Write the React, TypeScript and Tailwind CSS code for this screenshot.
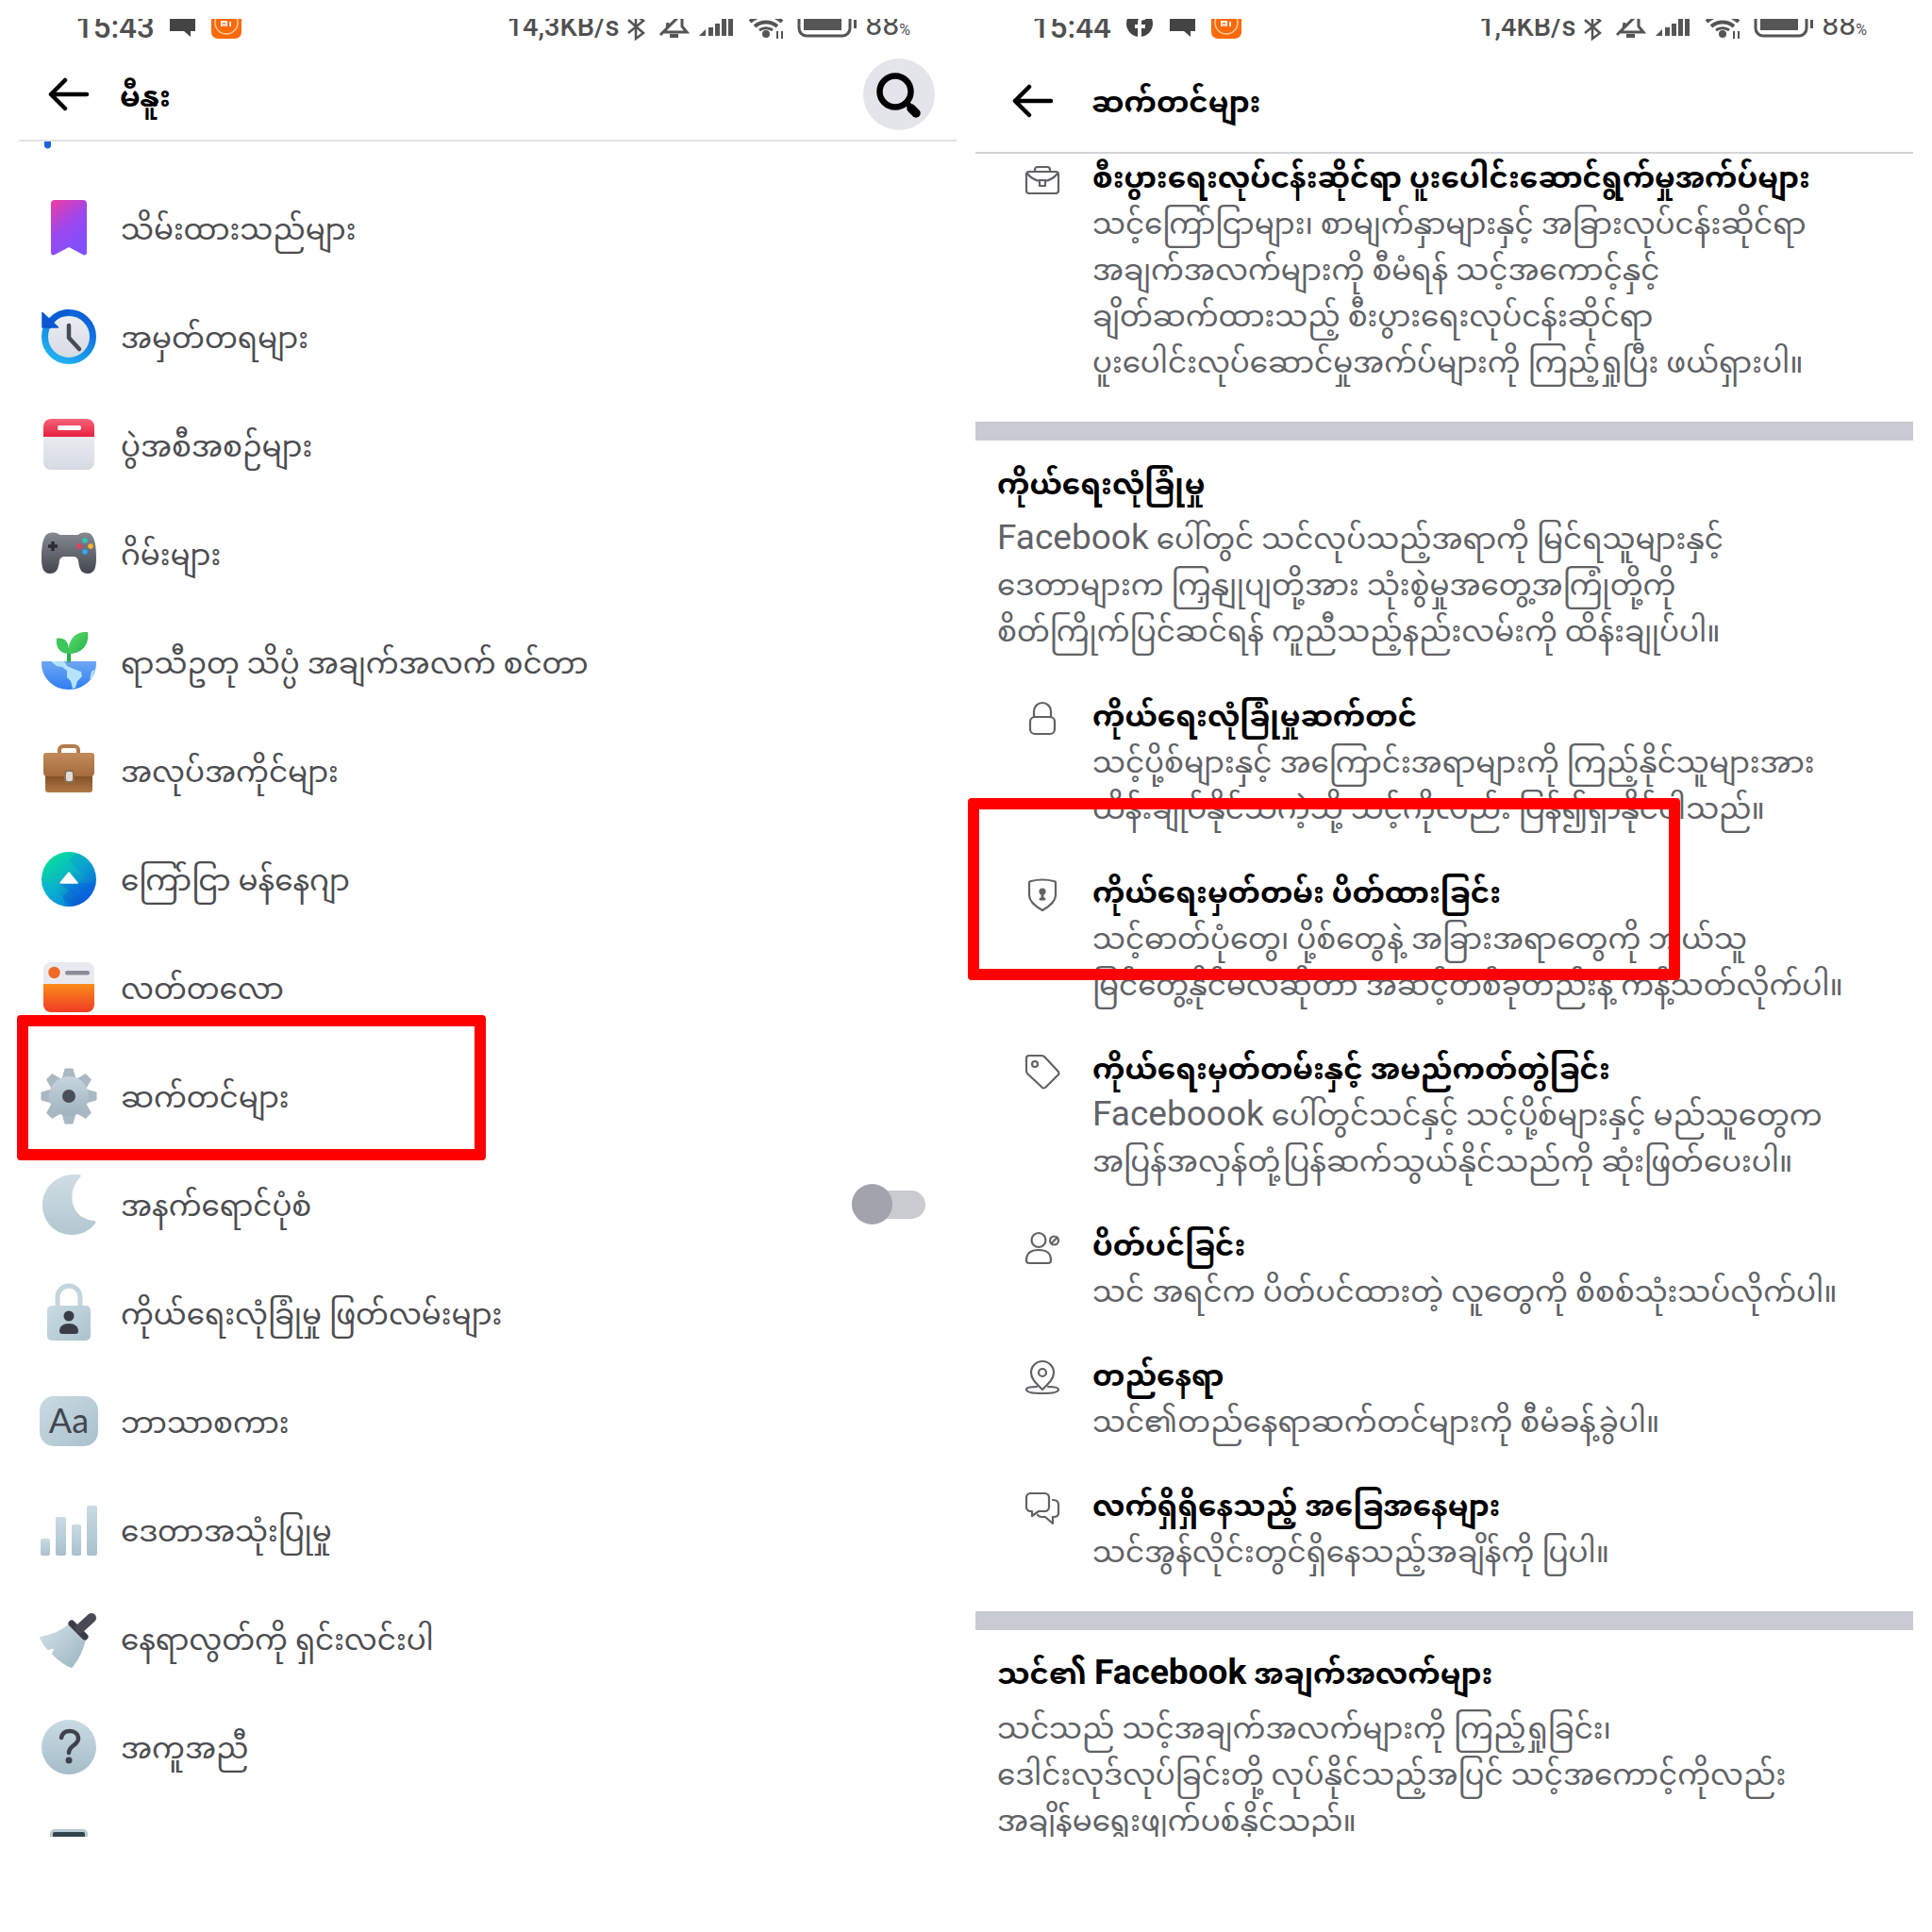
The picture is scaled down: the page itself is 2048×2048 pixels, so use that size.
import React from 'react';

type IconProps = { children: React.ReactNode };

function TileIcon({ children }: IconProps) {
  return (
    <svg className="size-[60px] shrink-0 overflow-visible" viewBox="0 0 60 60" fill="none" aria-hidden="true">
      {children}
    </svg>
  );
}

function LineIcon({ children }: IconProps) {
  return (
    <svg
      className="mt-[5px] size-9 shrink-0 overflow-visible"
      viewBox="0 0 36 36"
      fill="none"
      stroke="#606266"
      strokeWidth="2.2"
      strokeLinecap="round"
      strokeLinejoin="round"
      aria-hidden="true"
    >
      {children}
    </svg>
  );
}

function Fade({ id, from, to, slant = false }: { id: string; from: string; to: string; slant?: boolean }) {
  return (
    <linearGradient id={id} x1="0" y1="0" x2={slant ? '1' : '0'} y2="1">
      <stop stopColor={from} />
      <stop offset="1" stopColor={to} />
    </linearGradient>
  );
}

const gearTeeth = [0, 45, 90, 135, 180, 225, 270, 315];

const menuItems = [
  {
    label: 'သိမ်းထားသည်များ',
    icon: (
      <TileIcon>
        <defs>
          <linearGradient id="saved" x1="0" y1="0" x2="0.5" y2="1">
            <stop stopColor="#f03ba0" />
            <stop offset="0.55" stopColor="#9c48ee" />
            <stop offset="1" stopColor="#8150fa" />
          </linearGradient>
        </defs>
        <path d="M11 4a4 4 0 0 1 4-4h30a4 4 0 0 1 4 4v52c0 2-2 3-4 2L30 50 15 58c-2 1-4 0-4-2z" fill="url(#saved)" />
      </TileIcon>
    ),
  },
  {
    label: 'အမှတ်တရများ',
    icon: (
      <TileIcon>
        <defs>
          <linearGradient id="memory" x1="0.8" y1="0" x2="0.2" y2="1">
            <stop stopColor="#0a5cd8" />
            <stop offset="1" stopColor="#22b4f2" />
          </linearGradient>
          <Fade id="memoryFace" from="#eceef2" to="#d5d9e2" />
        </defs>
        <circle cx="30" cy="30" r="25.5" fill="url(#memoryFace)" stroke="url(#memory)" strokeWidth="7" />
        <path d="M8 20C12 11 20 4 31 4" stroke="#0b5ad3" strokeWidth="6" />
        <path d="M2 4.500L18.500 20H2z" fill="#0b57cf" stroke="#0b57cf" strokeWidth="1.500" strokeLinejoin="round" />
        <path d="M30 18v13l11 12" stroke="#474b55" strokeWidth="4.500" strokeLinecap="round" strokeLinejoin="round" />
      </TileIcon>
    ),
  },
  {
    label: 'ပွဲအစီအစဉ်များ',
    icon: (
      <TileIcon>
        <defs>
          <Fade id="eventTop" from="#f7647b" to="#e5203f" />
          <Fade id="eventBody" from="#e9ebf0" to="#d6dae3" />
        </defs>
        <path d="M3 20h54v28a8 8 0 0 1-8 8H11a8 8 0 0 1-8-8z" fill="url(#eventBody)" />
        <path d="M3 21v-11a8 8 0 0 1 8-8h38a8 8 0 0 1 8 8v11z" fill="url(#eventTop)" />
        <rect x="18" y="9" width="25" height="5" rx="2" fill="#fff" />
      </TileIcon>
    ),
  },
  {
    label: 'ဂိမ်းများ',
    icon: (
      <TileIcon>
        <defs>
          <Fade id="pad" from="#868a92" to="#43464f" />
        </defs>
        <path
          d="M7 9c3-2 9-2 12 0 1 1 2 1 3 1h16c1 0 2 0 3-1 3-2 9-2 12 0 5 4 6 15 6 25 0 9-1 17-9 17-7 0-9-5-10-14-1-3-3-4-5-4H25c-2 0-4 1-5 4-1 9-3 14-10 14-8 0-9-8-9-17C1 24 2 13 7 9z"
          fill="url(#pad)"
        />
        <path d="M13 17v10M8 22h10" stroke="#2b2d33" strokeWidth="3.500" />
        <circle cx="47" cy="16" r="2.800" fill="#30c9b4" />
        <circle cx="53" cy="22" r="2.800" fill="#f5b82e" />
        <circle cx="47" cy="28" r="2.800" fill="#32a9f2" />
        <circle cx="41" cy="22" r="2.800" fill="#ea3c60" />
      </TileIcon>
    ),
  },
  {
    label: 'ရာသီဥတု သိပ္ပံ အချက်အလက် စင်တာ',
    icon: (
      <TileIcon>
        <defs>
          <Fade id="earth" from="#6ea7f2" to="#2f7df2" />
          <Fade id="leaf" from="#5ddd6a" to="#24b04c" slant />
        </defs>
        <path d="M2 29h56c1 0 1 1 1 2 0 16-13 28-29 28S1 47 1 31c0-1 0-2 1-2z" fill="url(#earth)" />
        <path d="M11 29h14l3 5 7 3 8 3 1 5-5 5-2 7-3 1-2-8-4-4v-7l-5-4-6-1z" fill="#b4e3fb" />
        <path d="M54 40l4-3-3 9-3 2z" fill="#b4e3fb" />
        <path d="M30 30V15" stroke="#27b04d" strokeWidth="4" />
        <path d="M30 21C19 21 16 12 17 5c7-2 14 2 13 16z" fill="#3cc65c" />
        <path d="M30 21C28 5 38-3 50-2c2 13-6 23-20 23z" fill="url(#leaf)" />
      </TileIcon>
    ),
  },
  {
    label: 'အလုပ်အကိုင်များ',
    icon: (
      <TileIcon>
        <defs>
          <Fade id="caseTop" from="#c18a59" to="#a66c3d" />
          <Fade id="caseBase" from="#7d4a22" to="#b07946" />
        </defs>
        <path d="M20 13V8a4 4 0 0 1 4-4h12a4 4 0 0 1 4 4v5" stroke="#b27c4b" strokeWidth="4" />
        <path d="M5 33h50v17a3 3 0 0 1-3 3H8a3 3 0 0 1-3-3z" fill="url(#caseBase)" />
        <path d="M3 14a3 3 0 0 1 3-3h48a3 3 0 0 1 3 3v17c0 3-1 5-4 5H7c-3 0-4-2-4-5z" fill="url(#caseTop)" />
        <rect x="26" y="30" width="9" height="12" rx="3" fill="#e3dcd4" stroke="#8a7058" strokeWidth="2" />
      </TileIcon>
    ),
  },
  {
    label: 'ကြော်ငြာ မန်နေဂျာ',
    icon: (
      <TileIcon>
        <defs>
          <linearGradient id="ads" x1="0.2" y1="0.1" x2="0.85" y2="0.9">
            <stop stopColor="#06dba0" />
            <stop offset="0.45" stopColor="#0bb2c8" />
            <stop offset="1" stopColor="#0753dd" />
          </linearGradient>
          <clipPath id="adsClip">
            <circle cx="30" cy="30" r="29" />
          </clipPath>
        </defs>
        <g clipPath="url(#adsClip)">
          <rect width="60" height="60" fill="url(#ads)" />
          <path d="M30 10L42 0h18v40z" fill="#0a7fe0" fillOpacity="0.250" />
          <path d="M0 26L34 60H0z" fill="#08b0e0" fillOpacity="0.450" />
          <path d="M18 34h42L44 50z" fill="#0a55e4" fillOpacity="0.350" />
          <path d="M24 48l8-8 20 20H26z" fill="#0a48c8" fillOpacity="0.250" />
        </g>
        <path d="M30 23l9 11H21z" fill="#fff" stroke="#fff" strokeWidth="1.500" strokeLinejoin="round" />
      </TileIcon>
    ),
  },
  {
    label: 'လတ်တလော',
    icon: (
      <TileIcon>
        <defs>
          <Fade id="feed" from="#fa8c1b" to="#f03b25" />
        </defs>
        <path d="M3 26V11a8 8 0 0 1 8-8h38a8 8 0 0 1 8 8v15z" fill="#e9eaf0" />
        <path d="M3 26h54v22a8 8 0 0 1-8 8H11a8 8 0 0 1-8-8z" fill="url(#feed)" />
        <circle cx="14.500" cy="14" r="6.200" fill="#f06a22" />
        <rect x="26" y="12" width="26" height="4.500" rx="2.200" fill="#8a8d97" />
      </TileIcon>
    ),
  },
  {
    label: 'ဆက်တင်များ',
    icon: (
      <TileIcon>
        <defs>
          <Fade id="gear" from="#c6d5dd" to="#9fb2be" />
        </defs>
        {gearTeeth.map(angle => (
          <path key={angle} d="M26 1h8l3 11H23z" fill="#a9b8c3" stroke="#a9b8c3" strokeWidth="1" strokeLinejoin="round" transform={`rotate(${angle} 30 30)`} />
        ))}
        <circle cx="30" cy="30" r="21" fill="url(#gear)" />
        <circle cx="30" cy="30" r="7" fill="#4a4e58" />
      </TileIcon>
    ),
  },
  {
    label: 'အနက်ရောင်ပုံစံ',
    toggle: true,
    icon: (
      <TileIcon>
        <defs>
          <Fade id="moon" from="#cfdde3" to="#b2c7d1" />
        </defs>
        <path d="M41-2c2 0 2 2 1 3-14 14-12 43 14 46 3 0 3 2 1 4C51 58 43 62 33 62 15 62 2 48 2 30S17-2 36-2z" fill="url(#moon)" />
      </TileIcon>
    ),
  },
  {
    label: 'ကိုယ်ရေးလုံခြုံမှု ဖြတ်လမ်းများ',
    icon: (
      <TileIcon>
        <defs>
          <Fade id="lock" from="#c9dbe2" to="#abc3ce" slant />
        </defs>
        <path d="M18 25V13a12 12 0 0 1 24 0v12" stroke="#c3d5dd" strokeWidth="5" />
        <rect x="7" y="22" width="46" height="37" rx="5" fill="url(#lock)" />
        <circle cx="30" cy="33" r="5.500" fill="#3a3d47" />
        <path d="M20 49c0-5 4-8 10-8s10 3 10 8c0 2-1 3-3 3H23c-2 0-3-1-3-3z" fill="#3a3d47" />
      </TileIcon>
    ),
  },
  {
    label: 'ဘာသာစကား',
    icon: (
      <TileIcon>
        <defs>
          <Fade id="language" from="#c9dbe2" to="#a9c1cd" slant />
        </defs>
        <rect x="-1" y="3" width="62" height="53" rx="15" fill="url(#language)" />
        <text x="30" y="42" textAnchor="middle" fontSize="36" fill="#43464f" className="font-['Lato',sans-serif]">
          Aa
        </text>
      </TileIcon>
    ),
  },
  {
    label: 'ဒေတာအသုံးပြုမှု',
    icon: (
      <TileIcon>
        <defs>
          <Fade id="bars" from="#c9dbe2" to="#a9c1cd" />
        </defs>
        <rect x="0" y="39" width="10" height="18" rx="2" fill="url(#bars)" />
        <rect x="16" y="16" width="11" height="41" rx="2" fill="url(#bars)" />
        <rect x="33" y="24" width="10" height="33" rx="2" fill="url(#bars)" />
        <rect x="49" y="4" width="11" height="53" rx="2" fill="url(#bars)" />
      </TileIcon>
    ),
  },
  {
    label: 'နေရာလွတ်ကို ရှင်းလင်းပါ',
    icon: (
      <TileIcon>
        <defs>
          <Fade id="brush" from="#d3e1e7" to="#9bb5c2" slant />
        </defs>
        <path d="M31 15l16 15c-2 11-7 21-14 30-8-3-14-8-20-14l3-7-8 2c-3-3-6-7-8-12 11-2 22-6 31-14z" fill="url(#brush)" stroke="url(#brush)" strokeWidth="2" strokeLinejoin="round" />
        <path d="M33 14l14 14" stroke="#3a3d47" strokeWidth="7" strokeLinecap="round" />
        <path d="M42 19L54 8" stroke="#474a54" strokeWidth="10" strokeLinecap="round" />
      </TileIcon>
    ),
  },
  {
    label: 'အကူအညီ',
    icon: (
      <TileIcon>
        <defs>
          <Fade id="help" from="#c9dbe2" to="#a5bdc9" />
        </defs>
        <circle cx="30" cy="30" r="29" fill="url(#help)" />
        <path d="M22 20c1-5 4-7 9-7 5 0 9 3 9 8 0 7-10 7-10 15" stroke="#3f424c" strokeWidth="4.500" strokeLinecap="round" />
        <circle cx="30" cy="44" r="3.500" fill="#3f424c" />
      </TileIcon>
    ),
  },
];

const businessItems = [
  {
    title: 'စီးပွားရေးလုပ်ငန်းဆိုင်ရာ ပူးပေါင်းဆောင်ရွက်မှုအက်ပ်များ',
    lines: [
      'သင့်ကြော်ငြာများ၊ စာမျက်နှာများနှင့် အခြားလုပ်ငန်းဆိုင်ရာ',
      'အချက်အလက်များကို စီမံရန် သင့်အကောင့်နှင့်',
      'ချိတ်ဆက်ထားသည့် စီးပွားရေးလုပ်ငန်းဆိုင်ရာ',
      'ပူးပေါင်းလုပ်ဆောင်မှုအက်ပ်များကို ကြည့်ရှုပြီး ဖယ်ရှားပါ။',
    ],
    icon: (
      <LineIcon>
        <rect x="1" y="9" width="34" height="23" rx="3" />
        <path d="M10 9V7a3 3 0 0 1 3-3h10a3 3 0 0 1 3 3v2M2 11c4 5 8 7 13 8M34 11c-4 5-8 7-13 8M15 18h6v6h-6z" />
      </LineIcon>
    ),
  },
];

const privacyItems = [
  {
    title: 'ကိုယ်ရေးလုံခြုံမှုဆက်တင်',
    lines: [
      'သင့်ပို့စ်များနှင့် အကြောင်းအရာများကို ကြည့်နိုင်သူများအား',
      'ထိန်းချုပ်နိုင်သကဲ့သို့ သင့်ကိုလည်း ပြန်၍ရှာနိုင်ပါသည်။',
    ],
    icon: (
      <LineIcon>
        <rect x="5" y="16" width="26" height="18" rx="5" />
        <path d="M9 16v-6a9 9 0 0 1 18 0v6" />
      </LineIcon>
    ),
  },
  {
    title: 'ကိုယ်ရေးမှတ်တမ်း ပိတ်ထားခြင်း',
    lines: [
      'သင့်ဓာတ်ပုံတွေ၊ ပို့စ်တွေနဲ့ အခြားအရာတွေကို ဘယ်သူ',
      'မြင်တွေ့နိုင်မလဲဆိုတာ အဆင့်တစ်ခုတည်းနဲ့ ကန့်သတ်လိုက်ပါ။',
    ],
    icon: (
      <LineIcon>
        <path d="M4 5c0-1 1-2 2-2 8-2 16-2 24 0 1 0 2 1 2 2v13c0 7-7 12-14 16C11 30 4 25 4 18z" />
        <circle cx="18" cy="14" r="2.500" fill="#606266" />
        <path d="M18 15v7M16 22h4" strokeWidth="3" />
      </LineIcon>
    ),
  },
  {
    title: 'ကိုယ်ရေးမှတ်တမ်းနှင့် အမည်ကတ်တွဲခြင်း',
    lines: [
      'Faceboook ပေါ်တွင်သင်နှင့် သင့်ပို့စ်များနှင့် မည်သူတွေက',
      'အပြန်အလှန်တုံ့ပြန်ဆက်သွယ်နိုင်သည်ကို ဆုံးဖြတ်ပေးပါ။',
    ],
    icon: (
      <LineIcon>
        <path d="M1 4c0-2 1-3 3-3h12c2 0 3 0 4 1l14 15c2 2 2 4 0 5L22 34c-2 2-4 2-5 0L2 20c-1-1-1-2-1-4z" />
        <circle cx="10" cy="10" r="3" />
      </LineIcon>
    ),
  },
  {
    title: 'ပိတ်ပင်ခြင်း',
    lines: ['သင် အရင်က ပိတ်ပင်ထားတဲ့ လူတွေကို စိစစ်သုံးသပ်လိုက်ပါ။'],
    icon: (
      <LineIcon>
        <circle cx="14" cy="9.500" r="7.500" />
        <path d="M1 31c0-8 5-11 13-11s13 3 13 11c0 2-1 3-3 3H4c-2 0-3-1-3-3z" />
        <circle cx="30.500" cy="10" r="4.500" />
        <path d="M27.500 13l6-6" />
      </LineIcon>
    ),
  },
  {
    title: 'တည်နေရာ',
    lines: ['သင်၏တည်နေရာဆက်တင်များကို စီမံခန့်ခွဲပါ။'],
    icon: (
      <LineIcon>
        <path d="M18 30C12 24 6 19 6 12a12 12 0 0 1 24 0c0 7-6 12-12 18z" />
        <circle cx="18" cy="12" r="4" />
        <path d="M12 27c-7 0-11 1-11 3 0 3 8 4 17 4s17-1 17-4c0-2-4-3-11-3" />
      </LineIcon>
    ),
  },
  {
    title: 'လက်ရှိရှိနေသည့် အခြေအနေများ',
    lines: ['သင်အွန်လိုင်းတွင်ရှိနေသည့်အချိန်ကို ပြပါ။'],
    icon: (
      <LineIcon>
        <path d="M5 2h16c2 0 4 2 4 4v11c0 2-2 4-4 4h-7l-7 5v-5H5c-2 0-4-2-4-4V6c0-2 2-4 4-4z" />
        <path d="M29 9c4 0 6 2 6 5v9c0 3-2 4-5 4h-1v7l-8-7h-4c-2 0-3-1-4-2" />
      </LineIcon>
    ),
  },
];

const privacyIntro = [
  'Facebook ပေါ်တွင် သင်လုပ်သည့်အရာကို မြင်ရသူများနှင့်',
  'ဒေတာများက ကြှနျုပျတို့အား သုံးစွဲမှုအတွေ့အကြုံတို့ကို',
  'စိတ်ကြိုက်ပြင်ဆင်ရန် ကူညီသည့်နည်းလမ်းကို ထိန်းချုပ်ပါ။',
];

const informationIntro = [
  'သင်သည် သင့်အချက်အလက်များကို ကြည့်ရှုခြင်း၊',
  'ဒေါင်းလုဒ်လုပ်ခြင်းတို့ လုပ်နိုင်သည့်အပြင် သင့်အကောင့်ကိုလည်း',
  'အချိန်မရွေးဖျက်ပစ်နိုင်သည်။',
];

// Latin words run in Roboto and a step larger than the Myanmar text around them
function MixedText({ text }: { text: string }) {
  return (
    <>
      {text.split(/([A-Za-z]+)/).map((part, index) =>
        /[A-Za-z]/.test(part) ? (
          <span key={index} className="font-['Roboto',sans-serif] text-[37px] leading-none">{part}</span>
        ) : (
          part
        ),
      )}
    </>
  );
}

function TextLines({ lines }: { lines: string[] }) {
  return (
    <p className="whitespace-nowrap text-[#606266]">
      {lines.map(line => (
        <span className="block h-[49px]" key={line}><MixedText text={line} /></span>
      ))}
    </p>
  );
}

function StatusBar({ time, speed, facebook = false }: { time: string; speed: string; facebook?: boolean }) {
  return (
    <div className="h-6 overflow-hidden font-['Roboto',sans-serif] font-medium text-[#505050]">
      <div className="-mt-3 flex h-9 items-center justify-between pr-[49px] pl-[60px]">
        <div className="flex items-center">
          <span className="w-[100px] pt-1 text-[33px]">{time}</span>
          {facebook ? (
            <svg className="mr-[18px] h-9 w-7" viewBox="0 0 28 36" fill="none" aria-hidden="true">
              <circle cx="14" cy="17" r="14" fill="#444" />
              <path d="M14 32V16c0-4 2-5 6-5M9 20h11" stroke="#fff" strokeWidth="4" />
            </svg>
          ) : null}
          <svg className="mr-4 h-9 w-7" viewBox="0 0 28 36" fill="#444" aria-hidden="true">
            <path d="M0 6h27v19h-5v6l-7-6H0z" />
          </svg>
          <svg className="h-9 w-8" viewBox="0 0 32 36" fill="none" aria-hidden="true">
            <rect y="1" width="32" height="32" rx="7" fill="#fb6a0a" />
            <circle cx="16" cy="16" r="12" stroke="#ffc9a0" strokeWidth="1.500" />
            <path d="M11 20v-5h5v5M13.500 17v3M20 15v5" stroke="#fff" strokeWidth="1.800" />
          </svg>
        </div>
        <div className="flex items-center">
          <span className="mr-2 pt-1 text-[29px]">{speed}</span>
          <svg className="mr-[3px] h-9 w-[250px]" viewBox="665 9 250 36" fill="none" stroke="#555" strokeWidth="2.500" aria-hidden="true">
            <path d="M667 22l16 14-8 6V17l8 6-16 13" />
            <path d="M705 35h24l-5-6v-10c0-4-3-6-7-6M701 38l25-25M708 31l1-6" strokeWidth="3" />
            <path d="M711 39h9" strokeWidth="4" />
            <g fill="#555" stroke="none">
              <path d="M742 39l7-7v7z" />
              <path d="M752 30h5v9h-5zM759 26h5v13h-5zM766 21h5v18h-5zM773 16h5v23h-5z" />
              <circle cx="813" cy="37" r="4" />
              <path d="M853 18h40v15h-40z" />
              <path d="M906 22h3v9h-3z" />
            </g>
            <path d="M796 24c10-9 24-9 34 0M801 29c7-6 17-6 24 0" strokeWidth="4" />
            <path d="M806 33c4-3 10-3 14 0" strokeWidth="3" />
            <path d="M825 34v8M830 34v8" strokeWidth="2" />
            <rect x="848" y="9" width="54" height="30" rx="8" strokeWidth="3" />
          </svg>
          <span className="text-[32px] font-normal">
            88<span className="text-base">%</span>
          </span>
        </div>
      </div>
    </div>
  );
}

function BackButton() {
  return (
    <button type="button" aria-label="နောက်သို့" className="shrink-0">
      <svg className="h-9 w-11" viewBox="0 0 44 36" fill="none" stroke="#000" strokeWidth="4.500" strokeLinecap="round" strokeLinejoin="round" aria-hidden="true">
        <path d="M18 3L3 18l15 15M3 18h38" />
      </svg>
    </button>
  );
}

function SettingRows({ items }: { items: typeof privacyItems }) {
  return (
    <ul className="grid gap-10 pt-[5px] pl-[53px]">
      {items.map(item => (
        <li key={item.title}>
          <a href="#" className="flex gap-[35px]">
            {item.icon}
            <div>
              <h3 className="whitespace-nowrap font-bold text-black">{item.title}</h3>
              <TextLines lines={item.lines} />
            </div>
          </a>
        </li>
      ))}
    </ul>
  );
}

function MenuPanel() {
  return (
    <section className="overflow-hidden">
      <StatusBar time="15:43" speed="14,3KB/s" />
      <header className="flex h-[106px] items-center border-b-2 border-[#e1e2e4] pt-2 pr-[23px] pl-[31px]">
        <BackButton />
        <h1 className="ml-8 flex-1 pt-3 font-bold text-black">မီနူး</h1>
        <button type="button" aria-label="ရှာရန်" className="size-[76px] rounded-full bg-[#e4e5ea]">
          <svg viewBox="0 0 76 76" fill="none" stroke="#000" strokeLinecap="round" aria-hidden="true">
            <circle cx="34" cy="35" r="16.500" strokeWidth="6.500" />
            <path d="M47 48l2 2" strokeWidth="6" />
            <path d="M51 53l5 5" strokeWidth="9.500" />
          </svg>
        </button>
      </header>
      <svg className="h-[34px] w-[300px]" viewBox="0 0 300 34" aria-hidden="true">
        <path d="M27 0h7v4a3 3 0 0 1-7 0z" fill="#1b66d8" />
      </svg>
      <ul>
        {menuItems.map(item => (
          <li className="flex h-[115px] items-center pr-[33px] pl-[23px]" key={item.label}>
            {item.toggle ? (
              <label className="flex flex-1 items-center gap-[25px]">
                {item.icon}
                <span className="flex-1 pt-3">{item.label}</span>
                <input
                  type="checkbox"
                  className="relative h-[30px] w-[78px] appearance-none rounded-full bg-[#c9cbd0] before:absolute before:-top-[7px] before:left-0 before:size-[43px] before:rounded-full before:bg-[#a1a4ac]"
                />
              </label>
            ) : (
              <a href="#" className="flex flex-1 items-center gap-[25px]">
                {item.icon}
                <span className="pt-3">{item.label}</span>
              </a>
            )}
          </li>
        ))}
      </ul>
      <div className="h-[38px] overflow-hidden pt-[30px] pl-[31px]">
        <svg className="size-11" viewBox="0 0 44 44" aria-hidden="true">
          <rect x="2" width="40" height="44" rx="5" fill="#b9cbd3" />
          <rect x="5" y="3" width="34" height="40" rx="2" fill="#33444d" />
        </svg>
      </div>
    </section>
  );
}

function SettingsPanel() {
  return (
    <section className="overflow-hidden">
      <StatusBar time="15:44" speed="1,4KB/s" facebook />
      <header className="flex h-[119px] items-center border-b-2 border-[#d2d5d7] pt-2 pl-[39px]">
        <BackButton />
        <h1 className="ml-10 pt-3 font-bold text-black">ဆက်တင်များ</h1>
      </header>
      <SettingRows items={businessItems} />
      <hr className="mt-[34px] h-5 border-0 bg-[#c8cbd1]" />
      <div className="pt-[26px] pb-9 pl-[23px]">
        <h2 className="mb-[9px] font-bold text-black">ကိုယ်ရေးလုံခြုံမှု</h2>
        <TextLines lines={privacyIntro} />
      </div>
      <SettingRows items={privacyItems} />
      <hr className="mt-[34px] h-5 border-0 bg-[#c8cbd1]" />
      <div className="-mb-3 pt-[26px] pl-[23px]">
        <h2 className="mb-[9px] font-bold text-black"><MixedText text="သင်၏ Facebook အချက်အလက်များ" /></h2>
        <TextLines lines={informationIntro} />
      </div>
    </section>
  );
}

export default function App() {
  return (
    <main className="grid min-h-screen grid-cols-2 items-start gap-5 bg-white p-5 font-['Noto_Sans_Myanmar','Roboto',sans-serif] text-[31px] leading-[49px] text-[#4c4d50]">
      <div className="relative">
        <MenuPanel />
        <div className="pointer-events-none absolute top-[1056px] -left-[2px] h-[154px] w-1/2 rounded border-[12px] border-[#ff0000]" />
      </div>
      <div className="relative">
        <SettingsPanel />
        <div className="pointer-events-none absolute top-[826px] -left-2 h-[193px] w-[76%] rounded border-[12px] border-[#ff0000]" />
      </div>
    </main>
  );
}
